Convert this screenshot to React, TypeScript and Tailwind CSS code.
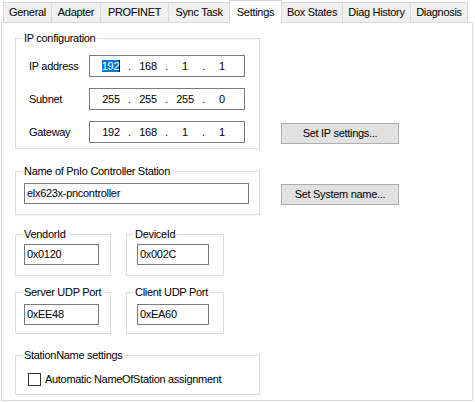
import type { ReactNode } from "react";

const tabs = [
  { name: "General", w: "w-[49px]" },
  { name: "Adapter", w: "w-[50px]" },
  { name: "PROFINET", w: "w-[69px]" },
  { name: "Sync Task", w: "w-[62px]" },
  { name: "Settings", w: "w-[53px]", active: true },
  { name: "Box States", w: "w-[62px]" },
  { name: "Diag History", w: "w-[69px]" },
  { name: "Diagnosis", w: "w-[58px]" },
];

const GroupBox = ({ label, className, children }: { label: string; className: string; children: ReactNode }) => (
  <div className={`relative border border-[#dcdcdc] ${className}`}>
    <span className="absolute left-[6px] -top-[8px] bg-white px-[2px] leading-[15px] whitespace-nowrap">{label}</span>
    {children}
  </div>
);

const TextBox = ({ value, className }: { value: string; className: string }) => (
  <div className={`flex items-center border border-[#7a7a7a] bg-white pl-[2px] ${className}`}>{value}</div>
);

const Button = ({ label, className }: { label: string; className?: string }) => (
  <div className={`flex h-[21px] w-[118px] items-center justify-center border border-[#adadad] bg-[#e1e1e1] ${className ?? ""}`}>
    {label}
  </div>
);

const IpField = ({ octets, selected }: { octets: string[]; selected?: boolean }) => (
  <div className="flex h-[22px] w-[156px] items-center border border-[#7a7a7a] bg-white pl-[9px]">
    {octets.map((o, i) => (
      <div key={i} className="flex items-center">
        {i > 0 && <span className="w-[13px] text-center">.</span>}
        <span className="flex w-[24px] justify-center">
          {selected && i === 0 ? (
            <span className="border-r border-black bg-[#0078d7] leading-[12px] text-white">{o}</span>
          ) : (
            o
          )}
        </span>
      </div>
    ))}
  </div>
);

const ipRows = [
  { label: "IP address", octets: ["192", "168", "1", "1"], selected: true },
  { label: "Subnet", octets: ["255", "255", "255", "0"] },
  { label: "Gateway", octets: ["192", "168", "1", "1"] },
];

export default function App() {
  return (
    <div className="h-[402px] w-[475px] bg-white text-[11px] tracking-[-0.3px] text-black font-['Liberation_Sans',Arial,sans-serif]">
      <div className="flex h-[22px] items-end pl-[3px]">
        {tabs.map((t, i) => (
          <div
            key={t.name}
            className={
              t.active
                ? `relative z-10 -mb-px flex h-[23px] ${t.w} -ml-px items-start justify-center border-x border-t border-[#d9d9d9] bg-white pt-[3px]`
                : `flex h-[20px] ${t.w} ${i > 0 ? "-ml-px" : ""} items-center justify-center border-x border-t border-[#d9d9d9] bg-[#f0f0f0]`
            }
          >
            {t.name}
          </div>
        ))}
      </div>

      <div className="ml-[1px] flex h-[379px] w-[472px] flex-col border border-[#d9d9d9] pl-[13px] pt-[15px]">
        <div className="flex items-end">
          <GroupBox label="IP configuration" className="h-[111px] w-[245px] pl-[13px] pt-[16px]">
            <div className="flex flex-col gap-[11px]">
              {ipRows.map((r) => (
                <div key={r.label} className="flex items-center">
                  <span className="w-[60px]">{r.label}</span>
                  <IpField octets={r.octets} selected={r.selected} />
                </div>
              ))}
            </div>
          </GroupBox>
          <Button label="Set IP settings..." className="mb-[5px] ml-[21px]" />
        </div>

        <div className="mt-[22px] flex items-start">
          <GroupBox label="Name of PnIo Controller Station" className="h-[44px] w-[245px] pl-[8px] pt-[11px]">
            <TextBox value="elx623x-pncontroller" className="h-[21px] w-[225px]" />
          </GroupBox>
          <Button label="Set System name..." className="ml-[21px] mt-[13px]" />
        </div>

        <div className="mt-[19px] flex gap-[15px]">
          <GroupBox label="VendorId" className="h-[42px] w-[96px] pl-[8px] pt-[9px]">
            <TextBox value="0x0120" className="h-[21px] w-[75px]" />
          </GroupBox>
          <GroupBox label="DeviceId" className="h-[42px] w-[98px] pl-[10px] pt-[9px]">
            <TextBox value="0x002C" className="h-[21px] w-[72px]" />
          </GroupBox>
        </div>

        <div className="mt-[16px] flex gap-[15px]">
          <GroupBox label="Server UDP Port" className="h-[42px] w-[96px] pl-[8px] pt-[11px]">
            <TextBox value="0xEE48" className="h-[21px] w-[75px]" />
          </GroupBox>
          <GroupBox label="Client UDP Port" className="h-[42px] w-[98px] pl-[10px] pt-[11px]">
            <TextBox value="0xEA60" className="h-[21px] w-[72px]" />
          </GroupBox>
        </div>

        <div className="mt-[21px]">
          <GroupBox label="StationName settings" className="h-[40px] w-[245px] pl-[12px] pt-[15px]">
            <div className="flex items-center gap-[4px]">
              <div className="h-[13px] w-[13px] border border-[#333333] bg-white" />
              <span>Automatic NameOfStation assignment</span>
            </div>
          </GroupBox>
        </div>
      </div>
    </div>
  );
}
